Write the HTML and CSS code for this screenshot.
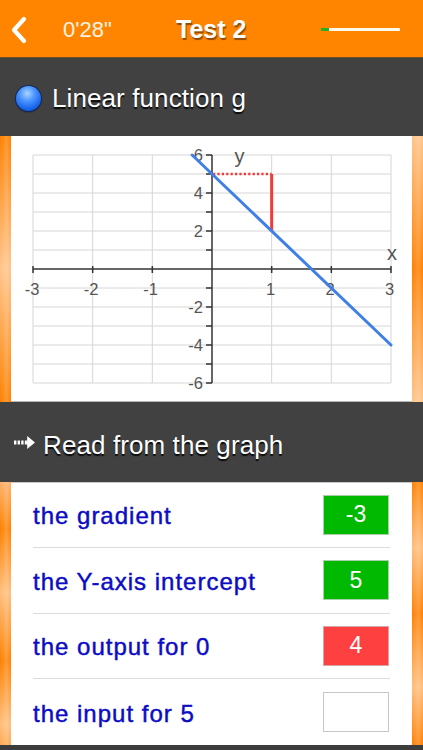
FILE: index.html
```html
<!DOCTYPE html>
<html>
<head>
<meta charset="utf-8">
<link rel="stylesheet" href="styles.css">
</head>
<body>
<div class="app">
  <header class="topbar">
    <svg class="back" width="20" height="28" viewBox="0 0 20 28"><polyline points="15,3 5,14 15,25" fill="none" stroke="#fff" stroke-width="4.2" stroke-linecap="round" stroke-linejoin="round"/></svg>
    <span class="timer">0'28"</span>
    <span class="title">Test 2</span>
    <div class="progress"><div class="progress-fill"></div></div>
  </header>

  <div class="head head1">
    <span class="ball"></span>
    <span class="head-text">Linear function g</span>
  </div>

  <div class="frame frame-graph">
    <div class="card graph-card">
      <svg class="graph" width="401" height="265" viewBox="0 0 401 265">
        <g class="grid">
          <line x1="22" y1="19" x2="22" y2="247"/>
          <line x1="81.67" y1="19" x2="81.67" y2="247"/>
          <line x1="141.33" y1="19" x2="141.33" y2="247"/>
          <line x1="260.67" y1="19" x2="260.67" y2="247"/>
          <line x1="320.33" y1="19" x2="320.33" y2="247"/>
          <line x1="380" y1="19" x2="380" y2="247"/>
          <line x1="22" y1="19" x2="380" y2="19"/>
          <line x1="22" y1="38" x2="380" y2="38"/>
          <line x1="22" y1="57" x2="380" y2="57"/>
          <line x1="22" y1="76" x2="380" y2="76"/>
          <line x1="22" y1="95" x2="380" y2="95"/>
          <line x1="22" y1="114" x2="380" y2="114"/>
          <line x1="22" y1="152" x2="380" y2="152"/>
          <line x1="22" y1="171" x2="380" y2="171"/>
          <line x1="22" y1="190" x2="380" y2="190"/>
          <line x1="22" y1="209" x2="380" y2="209"/>
          <line x1="22" y1="228" x2="380" y2="228"/>
          <line x1="22" y1="247" x2="380" y2="247"/>
        </g>
        <g class="axes">
          <line x1="22" y1="133" x2="380" y2="133"/>
          <line x1="201" y1="19" x2="201" y2="247"/>
          <line x1="22" y1="130" x2="22" y2="137"/>
          <line x1="81.67" y1="130" x2="81.67" y2="137"/>
          <line x1="141.33" y1="130" x2="141.33" y2="137"/>
          <line x1="260.67" y1="130" x2="260.67" y2="137"/>
          <line x1="320.33" y1="130" x2="320.33" y2="137"/>
          <line x1="380" y1="130" x2="380" y2="137"/>
          <line x1="195" y1="19" x2="201" y2="19"/>
          <line x1="195" y1="38" x2="201" y2="38"/>
          <line x1="195" y1="57" x2="201" y2="57"/>
          <line x1="195" y1="76" x2="201" y2="76"/>
          <line x1="195" y1="95" x2="201" y2="95"/>
          <line x1="195" y1="114" x2="201" y2="114"/>
          <line x1="195" y1="152" x2="201" y2="152"/>
          <line x1="195" y1="171" x2="201" y2="171"/>
          <line x1="195" y1="190" x2="201" y2="190"/>
          <line x1="195" y1="209" x2="201" y2="209"/>
          <line x1="195" y1="228" x2="201" y2="228"/>
          <line x1="195" y1="247" x2="201" y2="247"/>
        </g>
        <g class="labels">
          <text x="192" y="25" text-anchor="end">6</text>
          <text x="192" y="63" text-anchor="end">4</text>
          <text x="192" y="101" text-anchor="end">2</text>
          <text x="192" y="177" text-anchor="end">-2</text>
          <text x="192" y="215" text-anchor="end">-4</text>
          <text x="192" y="253" text-anchor="end">-6</text>
          <text x="21" y="158.5" text-anchor="middle">-3</text>
          <text x="80" y="158.5" text-anchor="middle">-2</text>
          <text x="139.5" y="158.5" text-anchor="middle">-1</text>
          <text x="259.5" y="158.5" text-anchor="middle">1</text>
          <text x="319" y="158.5" text-anchor="middle">2</text>
          <text x="378.5" y="158.5" text-anchor="middle">3</text>
          <text class="axis-name" x="381" y="124" text-anchor="middle">x</text>
          <text class="axis-name" x="228.5" y="27" text-anchor="middle">y</text>
        </g>
        <line class="dotted" x1="202" y1="38" x2="260.67" y2="38"/>
        <line class="red" x1="260.67" y1="38" x2="260.67" y2="95"/>
        <line class="fn" x1="181.1" y1="19" x2="380" y2="209"/>
      </svg>
    </div>
  </div>

  <div class="head head2">
    <svg class="arrow" width="21" height="13" viewBox="0 0 21 13">
      <rect x="0" y="4.5" width="2.4" height="4" fill="#fff"/>
      <rect x="3.6" y="4.5" width="2.4" height="4" fill="#fff"/>
      <rect x="7.2" y="4.5" width="2.4" height="4" fill="#fff"/>
      <rect x="10.8" y="4.5" width="3.5" height="4" fill="#fff"/>
      <polygon points="13.2,0 21,6.5 13.2,13" fill="#fff"/>
    </svg>
    <span class="head-text">Read from the graph</span>
  </div>

  <div class="frame frame-rows">
    <div class="card rows">
      <div class="row"><span class="q">the gradient</span><span class="box ok">-3</span></div>
      <div class="row"><span class="q">the Y-axis intercept</span><span class="box ok">5</span></div>
      <div class="row"><span class="q">the output for 0</span><span class="box bad">4</span></div>
      <div class="row"><span class="q">the input for 5</span><span class="box empty"></span></div>
    </div>
  </div>

  <div class="footer"></div>
</div>
</body>
</html>
```

FILE: styles.css
```css
* { box-sizing: border-box; }
html, body { margin: 0; padding: 0; }
body {
  width: 423px;
  height: 750px;
  overflow: hidden;
  background: #404040;
  font-family: "Liberation Sans", Arial, sans-serif;
}
.app {
  display: flex;
  flex-direction: column;
  width: 423px;
  height: 750px;
}
.topbar {
  height: 58px;
  background: #ff8500;
  display: flex;
  align-items: center;
  padding: 2px 0 0 9px;
  border-bottom: 1px solid #6a4a2a;
}
.back { display: block; flex: none; }
.timer {
  margin-left: 34px;
  font-size: 22px;
  color: #fff3e4;
  width: 113px;
}
.title {
  font-size: 25px;
  font-weight: bold;
  color: #fff;
  text-shadow: 1px 1.5px 1px rgba(0,0,0,0.45);
}
.progress {
  margin-left: 75px;
  width: 79px;
  height: 3px;
  background: #fffbea;
  border-radius: 1px;
}
.progress-fill {
  width: 8px;
  height: 3px;
  background: #25b020;
}
.head {
  background: #414141;
  display: flex;
  align-items: center;
  color: #fff;
  text-shadow: 0 1.5px 1px rgba(0,0,0,0.85);
}
.head1 {
  height: 78px;
  padding: 3px 0 0 16px;
}
.ball {
  width: 25px;
  height: 25px;
  border-radius: 50%;
  background: radial-gradient(circle at 45% 30%, #a9d2ff 0%, #4a94ff 35%, #1663e8 70%, #0d44b0 100%);
  box-shadow: 0 0 0 1px #10286a, 0 1px 2px rgba(0,0,0,0.6);
  margin-right: 11px;
}
.head-text {
  font-size: 26px;
  letter-spacing: 0.1px;
}
.head2 {
  height: 80px;
  padding: 6px 0 0 14px;
}
.arrow { display: block; margin-right: 8px; margin-top: -5px; }
.frame {
  padding: 0 11px;
  background-repeat: no-repeat;
}
.frame-graph {
  height: 266px;
  background-image:
    linear-gradient(to right, rgba(255,255,255,0) 0%, rgba(255,255,255,0.18) 60%, rgba(255,255,255,0) 100%),
    linear-gradient(to right, rgba(255,255,255,0) 0%, rgba(255,255,255,0.18) 60%, rgba(255,255,255,0) 100%),
    linear-gradient(to bottom, #ff8000 0%, #ffc489 50%, #ff8000 100%),
    linear-gradient(to bottom, #ffc489 0%, #ff8000 50%, #ffc489 100%);
  background-size: 11px 100%, 11px 100%, 11px 100%, 11px 100%;
  background-position: left top, right top, left top, right top;
}
.frame-rows {
  height: 263px;
  background-image:
    linear-gradient(to right, rgba(255,255,255,0) 0%, rgba(255,255,255,0.2) 60%, rgba(255,255,255,0) 100%),
    linear-gradient(to right, rgba(255,255,255,0) 0%, rgba(255,255,255,0.2) 60%, rgba(255,255,255,0) 100%),
    linear-gradient(to bottom, #ffb066 0%, #ff8000 18%, #ffbd7a 42%, #ff8000 68%, #ffbd7a 92%, #ffa850 100%),
    linear-gradient(to bottom, #ff8000 0%, #ffbd7a 25%, #ff8000 50%, #ffbd7a 78%, #ff8000 100%);
  background-size: 11px 100%, 11px 100%, 11px 100%, 11px 100%;
  background-position: left top, right top, left top, right top;
}
.card {
  background: #fff;
  height: 100%;
}
.graph-card {
  border-bottom: 1px solid #b8b8b8;
}
.graph { display: block; }
.grid line { stroke: #d6d6d6; stroke-width: 1; }
.axes line { stroke: #333; stroke-width: 1.5; }
.labels text {
  font-family: "Liberation Sans", Arial, sans-serif;
  font-size: 16.5px;
  fill: #555;
}
.labels .axis-name { font-size: 20px; }
.fn { stroke: #3f7fe6; stroke-width: 3; stroke-linecap: round; }
.red { stroke: #f23a3a; stroke-width: 3; }
.dotted { stroke: #f23a3a; stroke-width: 2.5; stroke-dasharray: 2.2 2.2; }
.rows {
  border-top: 1px solid #c8c8c8;
  display: flex;
  flex-direction: column;
}
.row {
  height: 66px;
  margin: 0 22px;
  display: flex;
  align-items: center;
  justify-content: space-between;
  border-bottom: 1px solid #dcdcdc;
}
.row:first-child { height: 65px; }
.row:last-child { border-bottom: none; }
.q {
  font-size: 24px;
  letter-spacing: 1px;
  color: #0c0cc4;
  padding-top: 3px;
  -webkit-text-stroke: 0.45px #0c0cc4;
}
.box {
  width: 66px;
  height: 40px;
  margin-right: 1px;
  display: flex;
  align-items: center;
  justify-content: center;
  font-size: 23px;
  color: #fff;
  border: 1.5px solid #c6c6c6;
}
.ok { background: #00b900; border-color: #a9cfa9; }
.bad { background: #ff4040; border-color: #d6a6a6; }
.empty { background: #fff; }
.footer {
  height: 5px;
  background: #3c3c3c;
}
```
